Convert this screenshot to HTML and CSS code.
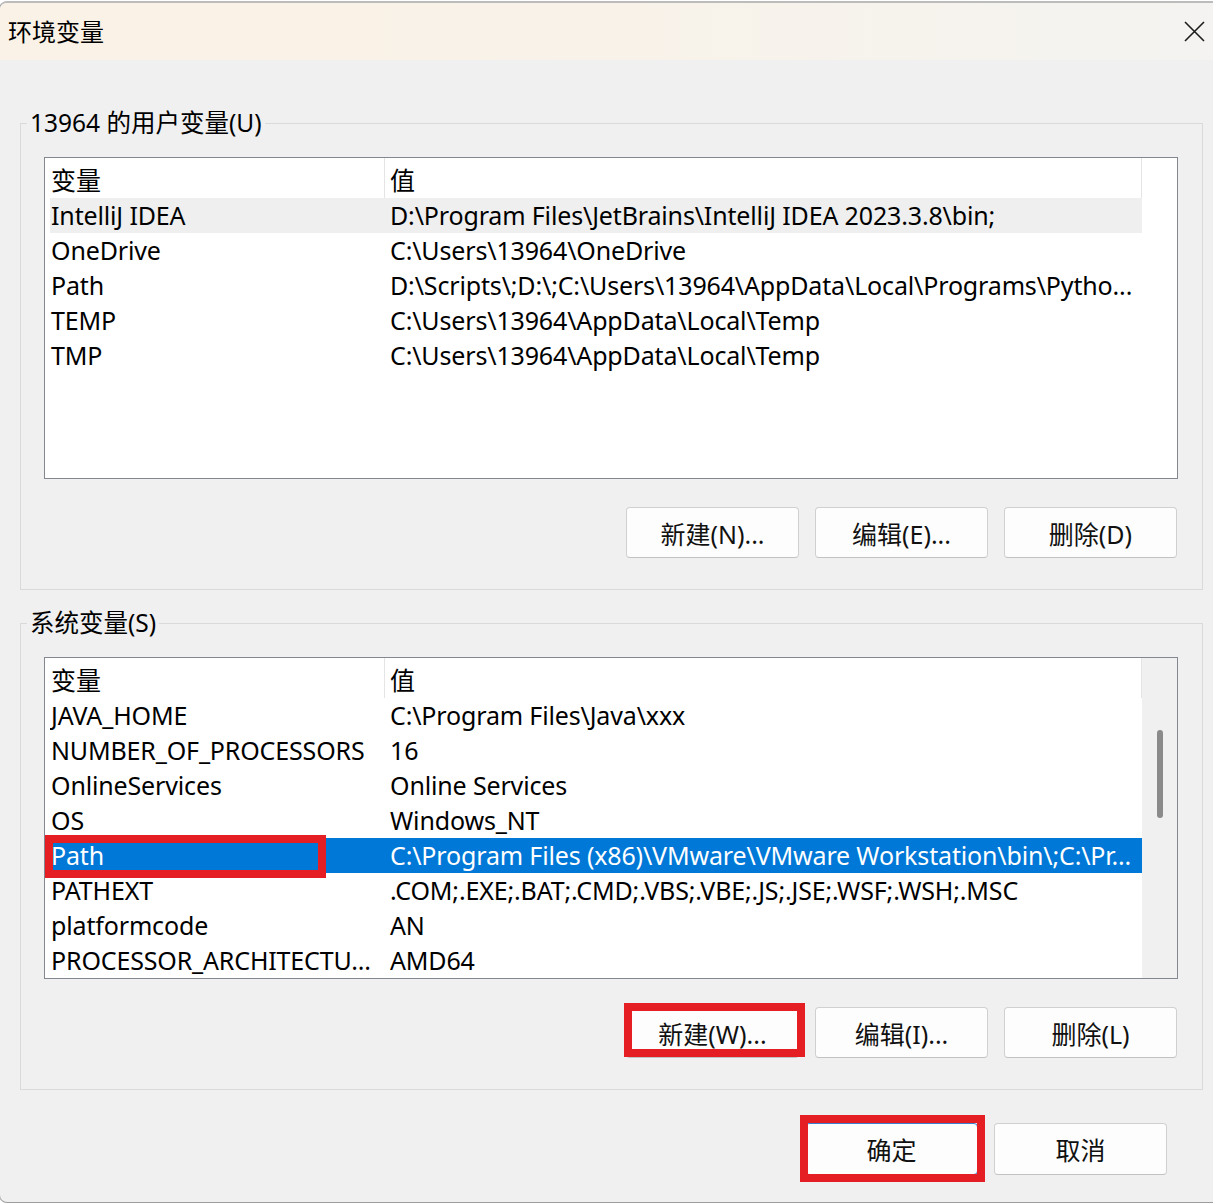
FILE: index.html
```html
<!DOCTYPE html>
<html lang="zh-CN">
<head>
<meta charset="utf-8">
<title>环境变量</title>
<link rel="stylesheet" href="styles.css">
</head>
<body>
<div class="window">
  <header class="titlebar">
    <span class="title">环境变量</span>
    <span class="close" aria-label="关闭">
      <svg width="21" height="21" viewBox="0 0 21 21"><path d="M1 1L20 20M20 1L1 20" stroke="#1c1c1c" stroke-width="1.6" fill="none"/></svg>
    </span>
  </header>

  <div class="content">
    <fieldset class="group">
      <legend>13964 的用户变量(U)</legend>
      <div class="group-body">
        <div class="list">
          <div class="list-main">
            <div class="row head"><div class="cell">变量</div><div class="cell">值</div></div>
            <div class="row hover"><div class="cell">IntelliJ IDEA</div><div class="cell">D:\Program Files\JetBrains\IntelliJ IDEA 2023.3.8\bin;</div></div>
            <div class="row"><div class="cell">OneDrive</div><div class="cell">C:\Users\13964\OneDrive</div></div>
            <div class="row"><div class="cell">Path</div><div class="cell">D:\Scripts\;D:\;C:\Users\13964\AppData\Local\Programs\Pytho...</div></div>
            <div class="row"><div class="cell">TEMP</div><div class="cell">C:\Users\13964\AppData\Local\Temp</div></div>
            <div class="row"><div class="cell">TMP</div><div class="cell">C:\Users\13964\AppData\Local\Temp</div></div>
          </div>
          <div class="list-side"></div>
        </div>
        <div class="actions">
          <button class="btn">新建(N)...</button>
          <button class="btn">编辑(E)...</button>
          <button class="btn">删除(D)</button>
        </div>
      </div>
    </fieldset>

    <fieldset class="group">
      <legend>系统变量(S)</legend>
      <div class="group-body">
        <div class="list">
          <div class="list-main">
            <div class="row head"><div class="cell">变量</div><div class="cell">值</div></div>
            <div class="row"><div class="cell">JAVA_HOME</div><div class="cell">C:\Program Files\Java\xxx</div></div>
            <div class="row"><div class="cell">NUMBER_OF_PROCESSORS</div><div class="cell">16</div></div>
            <div class="row"><div class="cell">OnlineServices</div><div class="cell">Online Services</div></div>
            <div class="row"><div class="cell">OS</div><div class="cell">Windows_NT</div></div>
            <div class="row selected"><div class="cell">Path</div><div class="cell">C:\Program Files (x86)\VMware\VMware Workstation\bin\;C:\Pr...</div><span class="mark mark-row"></span></div>
            <div class="row"><div class="cell">PATHEXT</div><div class="cell">.COM;.EXE;.BAT;.CMD;.VBS;.VBE;.JS;.JSE;.WSF;.WSH;.MSC</div></div>
            <div class="row"><div class="cell">platformcode</div><div class="cell">AN</div></div>
            <div class="row"><div class="cell">PROCESSOR_ARCHITECTU...</div><div class="cell">AMD64</div></div>
          </div>
          <div class="list-side scroll"><div class="thumb"></div></div>
        </div>
        <div class="actions">
          <button class="btn">新建(W)...<span class="mark mark-new"></span></button>
          <button class="btn">编辑(I)...</button>
          <button class="btn">删除(L)</button>
        </div>
      </div>
    </fieldset>

    <div class="footer">
      <button class="btn default">确定<span class="mark mark-ok"></span></button>
      <button class="btn">取消</button>
    </div>
  </div>
</div>
</body>
</html>
```

FILE: styles.css
```css
* {
  box-sizing: border-box;
}

html,
body {
  margin: 0;
}

body {
  width: 1213px;
  height: 1204px;
  overflow: hidden;
  background: #ffffff;
  color: #000000;
  font-family: "Noto Sans", "Noto Sans CJK SC", sans-serif;
  font-size: 25px;
}

/* dialog frame; its left edge sits just off the viewport */
.window {
  margin: 1px 0 0 -1px;
  height: 1202px;
  background: #f0f0f0;
  border-top: 2px solid #bcbcbc;
  border-left: 1px solid #a8a8a8;
  border-bottom: 1px solid #9c9c9c;
  border-radius: 8px 0 0 8px;
  overflow: hidden;
}

.titlebar {
  height: 57px;
  display: flex;
  align-items: center;
  justify-content: space-between;
  padding: 0 8px 0 8px;
  background: linear-gradient(90deg, #faf2e6 0%, #f9f2e8 45%, #f6f3ed 75%, #f4f3f1 100%);
}

.title {
  font-size: 24px;
  line-height: 30px;
  padding-top: 1px;
}

.close {
  display: flex;
  width: 21px;
  height: 21px;
}

.content {
  padding: 48px 0 0 20px;
}

/* group boxes */
.group {
  width: 1183px;
  min-width: 0;
  margin: 0;
  padding: 0;
  border: 1px solid #dadada;
}

.group + .group {
  margin-top: 18px;
}

.group legend {
  margin-left: 6px;
  padding: 0 3px;
  font-size: 24.5px;
  line-height: 30px;
}

.group-body {
  padding: 19px 24px 31px 23px;
}

/* list view */
.list {
  height: 322px;
  display: flex;
  padding-left: 5px;
  background: #ffffff;
  border: 1px solid #828790;
}

.list-main {
  width: 1092px;
  flex: none;
}

.list-side {
  width: 35px;
  flex: none;
}

.list-side.scroll {
  background: #f0f0f0;
  padding-top: 72px;
}

.thumb {
  width: 6px;
  height: 88px;
  margin: 0 auto;
  border-radius: 3px;
  background: #8a8a8a;
}

.row {
  position: relative;
  display: grid;
  grid-template-columns: 335px 1fr;
  height: 35px;
  line-height: 35px;
  white-space: nowrap;
  letter-spacing: -0.15px;
}

.row .cell {
  overflow: hidden;
  padding-left: 1px;
}

.row .cell + .cell {
  padding-left: 5px;
}

.row.head {
  height: 40px;
  letter-spacing: 0;
}

.row.head .cell {
  padding-top: 4px;
  line-height: 36px;
  border-right: 1px solid #e5e5e5;
}

.row.hover {
  background: #efefef;
}

.row.selected {
  background: #0078d7;
  color: #ffffff;
}

/* buttons */
.actions {
  display: flex;
  justify-content: flex-end;
  gap: 16px;
  margin-top: 28px;
  padding-right: 1px;
}

.btn {
  position: relative;
  width: 173px;
  height: 51px;
  padding: 0;
  font: inherit;
  color: #111111;
  background: #fdfdfd;
  border: 1px solid #d0d0d0;
  border-bottom-color: #c2c2c2;
  border-radius: 4px;
}

.footer {
  width: 1183px;
  display: flex;
  justify-content: flex-end;
  gap: 16px;
  margin-top: 33px;
  padding-right: 36px;
}

.footer .btn {
  height: 52px;
}

.btn.default {
  border-color: #3b7fd0;
}

/* red highlight frames */
.mark {
  position: absolute;
  border: 8px solid #e41e22;
  pointer-events: none;
}

.mark-row {
  left: -5px;
  top: -3px;
  width: 281px;
  height: 43px;
}

.mark-new {
  left: -3px;
  top: -5px;
  right: -7px;
  bottom: 0;
}

.mark-ok {
  left: -6px;
  top: -9px;
  right: -8px;
  bottom: -8px;
}
```
